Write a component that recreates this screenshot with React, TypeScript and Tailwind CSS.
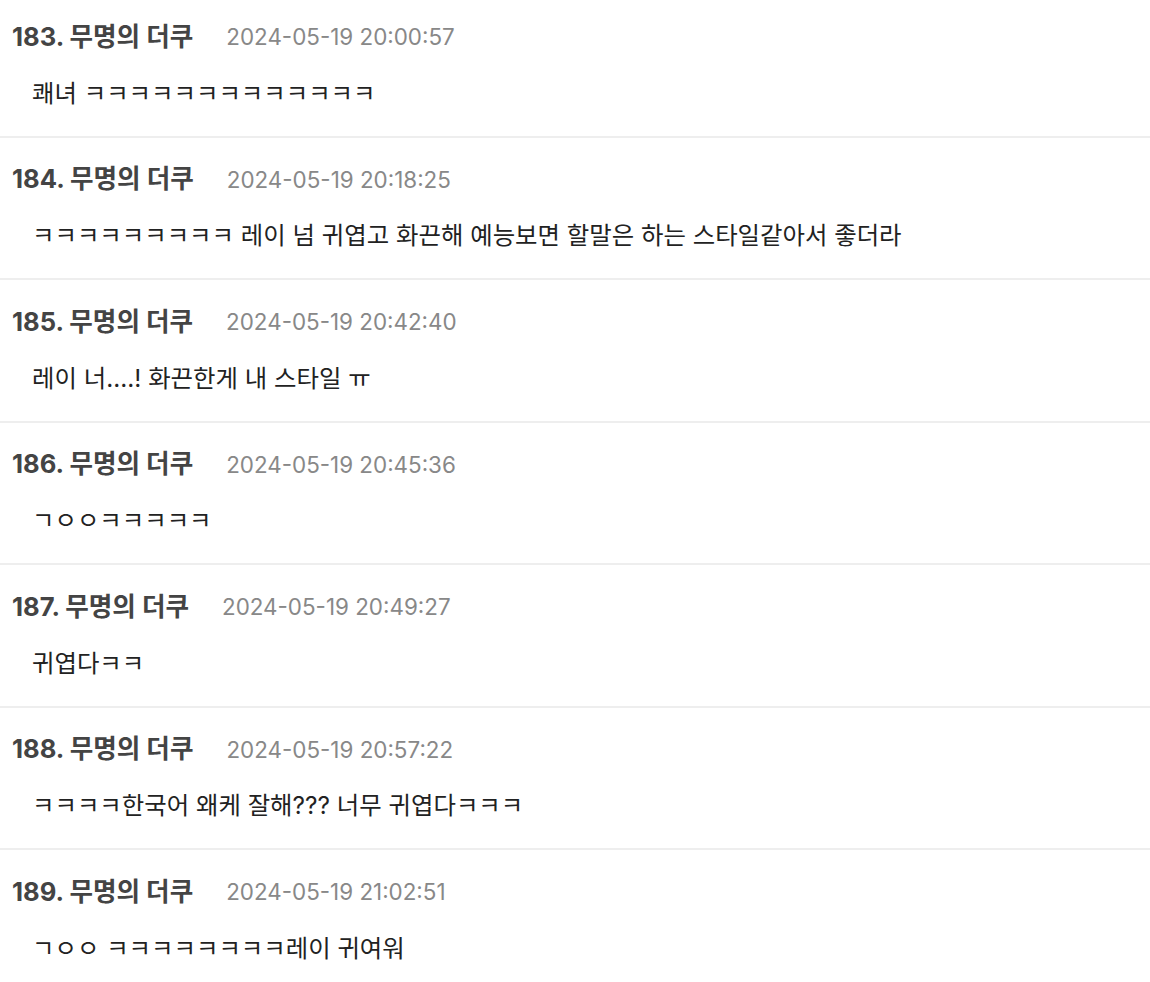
const comments = [
  { no: 183, time: '2024-05-19 20:00:57', body: '쾌녀 ㅋㅋㅋㅋㅋㅋㅋㅋㅋㅋㅋㅋㅋ' },
  { no: 184, time: '2024-05-19 20:18:25', body: 'ㅋㅋㅋㅋㅋㅋㅋㅋㅋ 레이 넘 귀엽고 화끈해 예능보면 할말은 하는 스타일같아서 좋더라' },
  { no: 185, time: '2024-05-19 20:42:40', body: '레이 너....! 화끈한게 내 스타일 ㅠ' },
  { no: 186, time: '2024-05-19 20:45:36', body: 'ㄱㅇㅇㅋㅋㅋㅋㅋ' },
  { no: 187, time: '2024-05-19 20:49:27', body: '귀엽다ㅋㅋ' },
  { no: 188, time: '2024-05-19 20:57:22', body: 'ㅋㅋㅋㅋ한국어 왜케 잘해??? 너무 귀엽다ㅋㅋㅋ' },
  { no: 189, time: '2024-05-19 21:02:51', body: 'ㄱㅇㅇ ㅋㅋㅋㅋㅋㅋㅋㅋ레이 귀여워' },
]

const font = { fontFamily: '"Inter", "Noto Sans CJK KR", sans-serif' }

const App = () => {
  return (
    <div className="min-h-screen w-[1150px] bg-white overflow-hidden" style={font}>
      {comments.map((c, i) => (
        <div
          key={c.no}
          className={`border-b-2 border-[#eeeeee] pb-[27.5px] ${i === 0 ? 'pt-[22px]' : 'pt-[27px]'}`}
        >
          <div className="flex items-center h-[30px] pl-[12px]">
            <span className="text-[25.6px] font-bold text-[#444444]">{c.no}. 무명의 더쿠</span>
            <span className="ml-[33px] text-[22.4px] text-[#888888]">{c.time}</span>
          </div>
          <div className="mt-[26px] flex items-center h-[30px] pl-[32px] text-[24.4px] text-[#222222]">
            {c.body}
          </div>
        </div>
      ))}
    </div>
  )
}

export default App
